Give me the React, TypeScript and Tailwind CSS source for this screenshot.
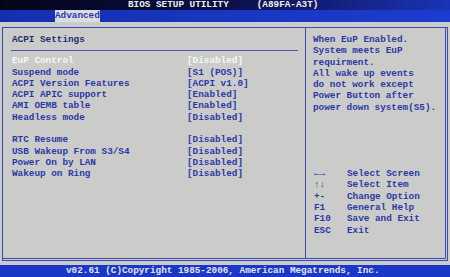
import React from "react";

const mono = { fontFamily: '"Liberation Mono", "DejaVu Sans Mono", monospace' };

const rows1: [string, string, boolean][] = [
  ["EuP Control", "[Disabled]", true],
  ["Suspend mode", "[S1 (POS)]", false],
  ["ACPI Version Features", "[ACPI v1.0]", false],
  ["ACPI APIC support", "[Enabled]", false],
  ["AMI OEMB table", "[Enabled]", false],
  ["Headless mode", "[Disabled]", false],
];
const rows2: [string, string][] = [
  ["RTC Resume", "[Disabled]"],
  ["USB Wakeup From S3/S4", "[Disabled]"],
  ["Power On by LAN", "[Disabled]"],
  ["Wakeup on Ring", "[Disabled]"],
];
const help = [
  "When EuP Enabled.",
  "System meets EuP",
  "requirment.",
  "All wake up events",
  "do not work except",
  "Power Button after",
  "power down system(S5).",
];
const keys: [string, string][] = [
  ["←→", "Select Screen"],
  ["↑↓", "Select Item"],
  ["+-", "Change Option"],
  ["F1", "General Help"],
  ["F10", "Save and Exit"],
  ["ESC", "Exit"],
];

export default function App() {
  return (
    <div
      className="w-[450px] h-[277px] bg-[#cbccc9] flex flex-col overflow-hidden font-bold text-[9.33px] leading-[11.3px] text-[#2a38a8] whitespace-pre"
      style={mono}
    >
      <div className="h-[10px] bg-gradient-to-r from-[#05051a] via-[#0b0f48] to-[#1a34b8] text-[#f0f0f0] pl-[128px] leading-[10px]">
        BIOS SETUP UTILITY     (A89FA-A3T)
      </div>
      <div className="h-[12px] bg-gradient-to-r from-[#1430b0] to-[#1c3cd0] flex">
        <div className="ml-[55px] w-[45px] bg-[#dcdde2] text-[#2a38b0] leading-[12px]">Advanced</div>
      </div>
      <div className="h-[5px]" />
      <div className="ml-[2px] w-[446px] h-[234px] border-l border-t border-r-[3px] border-b-[3px] border-double border-[#3a48b8] flex">
        <div className="w-[303px] border-r border-[#3a48b8] pt-[6px] pl-[9px]">
          <div className="text-[#262c70]">ACPI Settings</div>
          <div className="h-[5px]" />
          <div className="w-[287px] -ml-[1px] h-px bg-[#4a56b8]" />
          <div className="h-[4px]" />
          {rows1.map(([a, b, sel]) => (
            <div key={a} className={`flex ${sel ? "text-[#f6f6f6]" : ""}`}>
              <div className="w-[175px]">{a}</div>
              <div>{b}</div>
            </div>
          ))}
          <div className="h-[11.3px]" />
          {rows2.map(([a, b]) => (
            <div key={a} className="flex">
              <div className="w-[175px]">{a}</div>
              <div>{b}</div>
            </div>
          ))}
        </div>
        <div className="flex-1 pt-[6px] pl-[7px]">
          {help.map((h) => (
            <div key={h}>{h}</div>
          ))}
          <div className="h-[55px]" />
          {keys.map(([k, d]) => (
            <div key={d} className="flex">
              <div className="w-[34px] pl-[1px]">{k}</div>
              <div>{d}</div>
            </div>
          ))}
        </div>
      </div>
      <div className="h-[4px]" />
      <div className="flex-1 bg-[#1a38c8] text-[#e4e4ee] pl-[66px] leading-[12px]">
        v02.61 (C)Copyright 1985-2006, American Megatrends, Inc.
      </div>
    </div>
  );
}
